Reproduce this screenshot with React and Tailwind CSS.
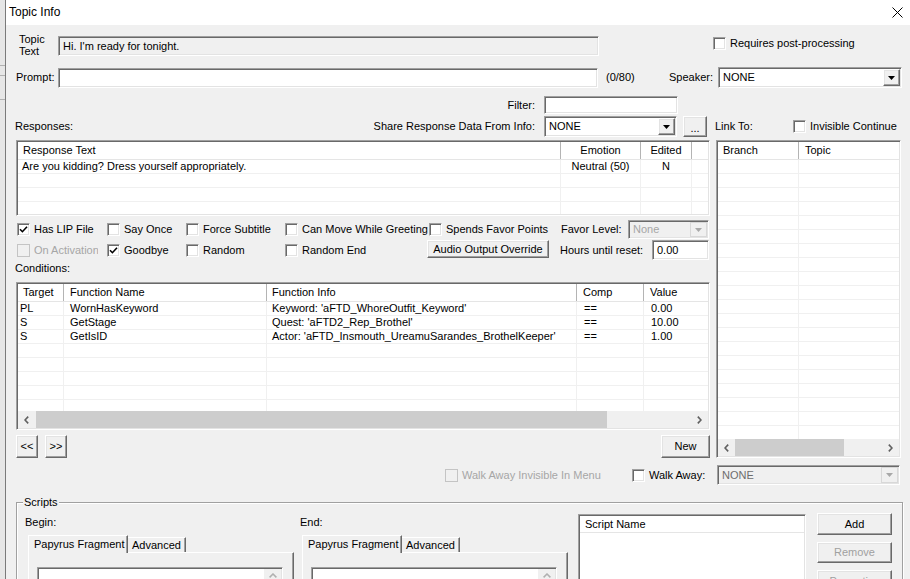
import React from "react";

const sunken =
  "border border-t-[#a0a0a0] border-l-[#a0a0a0] border-b-white border-r-white shadow-[inset_1px_1px_0_#696969,inset_-1px_-1px_0_#e3e3e3]";
const raised =
  "border border-t-white border-l-white border-b-[#696969] border-r-[#696969] shadow-[inset_-1px_-1px_0_#a0a0a0,inset_1px_1px_0_#e3e3e3]";

function Box({ checked, disabled }) {
  return (
    <span
      className={`w-[13px] h-[13px] shrink-0 flex items-center justify-center ${
        disabled ? "border border-[#c4c4c4] bg-[#f0f0f0]" : `${sunken} bg-white`
      }`}
    >
      {checked && (
        <svg width="9" height="9" viewBox="0 0 9 9">
          <path d="M1 4.3L3.4 6.7L8 1.8" stroke="#000" strokeWidth="1.6" fill="none" />
        </svg>
      )}
    </span>
  );
}

function CheckItem({ label, checked, disabled, className = "", labelClass = "" }) {
  return (
    <div className={`flex items-center gap-[4px] shrink-0 ${className}`}>
      <Box checked={checked} disabled={disabled} />
      <span className={`whitespace-nowrap ${disabled ? "text-[#a6a6a6]" : ""} ${labelClass}`}>{label}</span>
    </div>
  );
}

function Tri({ color }) {
  return (
    <svg width="7" height="4" viewBox="0 0 7 4">
      <path d="M0 0H7L3.5 4Z" fill={color} />
    </svg>
  );
}

function Combo({ className, value, disabled, textClass = "" }) {
  return (
    <div
      className={`flex items-stretch p-[1px] shrink-0 ${sunken} ${disabled ? "bg-[#f0f0f0]" : "bg-white"} ${className}`}
    >
      <span className={`flex-1 flex items-center pl-[3px] whitespace-nowrap overflow-hidden ${textClass}`}>{value}</span>
      <span className={`w-[17px] flex items-center justify-center bg-[#f0f0f0] ${disabled ? "border border-[#d8d8d8]" : raised}`}>
        <Tri color={disabled ? "#a8a8a8" : "#000"} />
      </span>
    </div>
  );
}

function Btn({ className = "", children, disabled }) {
  return (
    <div
      className={`flex items-center justify-center shrink-0 bg-[#f0f0f0] whitespace-nowrap ${raised} ${
        disabled ? "text-[#a0a0a0]" : ""
      } ${className}`}
    >
      {children}
    </div>
  );
}

function Chevron({ dir }) {
  return (
    <svg width="5" height="8" viewBox="0 0 5 8">
      <path
        d={dir === "left" ? "M4.2 0.6L1 4L4.2 7.4" : "M0.8 0.6L4 4L0.8 7.4"}
        stroke="#606060"
        strokeWidth="1.6"
        fill="none"
      />
    </svg>
  );
}

function HScroll({ thumbClass }) {
  return (
    <div className="h-[17px] shrink-0 flex bg-[#f0f0f0]">
      <div className="w-[17px] flex items-center justify-center">
        <Chevron dir="left" />
      </div>
      <div className="flex-1 flex items-stretch">
        <div className={`bg-[#cdcdcd] ${thumbClass}`} />
      </div>
      <div className="w-[17px] flex items-center justify-center">
        <Chevron dir="right" />
      </div>
    </div>
  );
}

function ListView({ className, cols, data = [], rowCount, hscroll }) {
  return (
    <div className={`flex flex-col bg-white overflow-hidden p-[1px] ${sunken} ${className}`}>
      <div className="flex h-[18px] shrink-0 border-b border-[#e5e5e5] bg-white">
        {cols.map((c, i) => (
          <div
            key={i}
            className={`${c.w} shrink-0 h-full flex items-center border-r border-[#b4b4b4] whitespace-nowrap ${c.hc}`}
          >
            {c.label}
          </div>
        ))}
        <div className="flex-1" />
      </div>
      <div className="flex-1 overflow-hidden">
        {Array.from({ length: rowCount }).map((_, r) => (
          <div key={r} className="flex h-[14px] border-b border-[#f0f0f0]">
            {cols.map((c, i) => (
              <div
                key={i}
                className={`${c.w} shrink-0 h-full flex items-center border-r border-[#f0f0f0] whitespace-nowrap overflow-hidden ${c.bc}`}
              >
                {data[r] ? data[r][i] : ""}
              </div>
            ))}
            <div className="flex-1" />
          </div>
        ))}
      </div>
      {hscroll}
    </div>
  );
}

function TabBlock({ label, tabMl }) {
  return (
    <div className="flex flex-col">
      <div className="mt-[3px] h-[12px] leading-[12px]">{label}</div>
      <div className={`mt-[7px] h-[17px] flex items-end ${tabMl}`}>
        <div className="relative z-10 w-[100px] h-[18px] -mb-[1px] pl-[5px] flex items-center bg-[#f0f0f0] border-t border-l border-r border-t-white border-l-white border-r-[#696969] shadow-[inset_-1px_0_0_#a0a0a0]">
          Papyrus Fragment
        </div>
        <div className="w-[58px] h-[15px] pl-[4px] flex items-center bg-[#f0f0f0] border-t border-r border-t-white border-r-[#696969] shadow-[inset_-1px_0_0_#a0a0a0]">
          Advanced
        </div>
      </div>
      <div
        className={`w-[266px] h-[60px] bg-[#f0f0f0] border-t border-l border-r border-t-white border-l-white border-r-[#696969] shadow-[inset_-1px_0_0_#a0a0a0] pt-[14px] pl-[8px] ${tabMl}`}
      >
        <div className={`w-[246px] h-[40px] bg-white p-[1px] flex justify-end ${sunken}`}>
          <div className="w-[17px] bg-[#f0f0f0] flex justify-center pt-[4px]">
            <svg width="8" height="5" viewBox="0 0 8 5">
              <path d="M0.6 4.4L4 1L7.4 4.4" stroke="#b0b0b0" strokeWidth="1.5" fill="none" />
            </svg>
          </div>
        </div>
      </div>
    </div>
  );
}

const respCols = [
  { w: "w-[543px]", label: "Response Text", hc: "pl-[5px]", bc: "pl-[4px]" },
  { w: "w-[80px]", label: "Emotion", hc: "justify-center", bc: "justify-center" },
  { w: "w-[51px]", label: "Edited", hc: "justify-center", bc: "justify-center" },
];

const condCols = [
  { w: "w-[46px]", label: "Target", hc: "pl-[5px]", bc: "pl-[2px]" },
  { w: "w-[203px]", label: "Function Name", hc: "pl-[6px]", bc: "pl-[6px]" },
  { w: "w-[310px]", label: "Function Info", hc: "pl-[5px]", bc: "pl-[5px]" },
  { w: "w-[67px]", label: "Comp", hc: "pl-[6px]", bc: "pl-[7px]" },
  { w: "w-[80px]", label: "Value", hc: "pl-[6px]", bc: "pl-[7px]" },
];

const condData = [
  ["PL", "WornHasKeyword", "Keyword: 'aFTD_WhoreOutfit_Keyword'", "==", "0.00"],
  ["S", "GetStage", "Quest: 'aFTD2_Rep_Brothel'", "==", "10.00"],
  ["S", "GetIsID", "Actor: 'aFTD_Insmouth_UreamuSarandes_BrothelKeeper'", "==", "1.00"],
];

const linkCols = [
  { w: "w-[81px]", label: "Branch", hc: "pl-[5px]", bc: "" },
  { w: "w-[120px]", label: "Topic", hc: "pl-[6px]", bc: "" },
];

export default function App() {
  return (
    <div className="w-[910px] h-[579px] overflow-hidden flex bg-[#f0f0f0] text-[11px] leading-[13px] text-black font-['Liberation_Sans',Arial,sans-serif]">
      <div className="w-[6px] shrink-0 bg-[#e6e6e6] border-r border-[#7a7a7a] flex flex-col">
        <div className="h-[66px] border-b border-[#b0b0b0]" />
        <div className="h-[10px] border-b border-[#b0b0b0]" />
        <div className="h-[24px] border-b border-[#b0b0b0]" />
      </div>
      <div className="w-[904px] shrink-0 flex flex-col">
        <div className="h-[25px] shrink-0 bg-white flex items-center justify-between pl-[3px] pr-[7px] text-[12px]">
          <span>Topic Info</span>
          <svg width="11" height="11" viewBox="0 0 11 11">
            <path d="M0.5 0.5L10.5 10.5M10.5 0.5L0.5 10.5" stroke="#000" strokeWidth="1" />
          </svg>
        </div>

        <div className="flex-1 flex flex-col pl-[10px]">
          {/* Row A */}
          <div className="mt-[11px] h-[20px] flex items-center shrink-0">
            <div className="w-[42px] pl-[3px] leading-[12px] shrink-0 -mt-[2px]">
              Topic
              <br />
              Text
            </div>
            <div className={`w-[541px] h-[20px] shrink-0 ${sunken} bg-[#f0f0f0] flex items-center pl-[4px]`}>
              Hi. I'm ready for tonight.
            </div>
            <CheckItem className="ml-[114px] self-start mt-[1px]" label="Requires post-processing" />
          </div>

          {/* Row B */}
          <div className="mt-[11px] h-[21px] flex items-center shrink-0">
            <div className="w-[42px] shrink-0">Prompt:</div>
            <div className={`w-[540px] h-[20px] shrink-0 ${sunken} bg-white`} />
            <div className="w-[71px] pl-[8px] shrink-0">(0/80)</div>
            <div className="w-[49px] shrink-0">Speaker:</div>
            <Combo className="w-[184px] h-[21px]" value="NONE" />
          </div>

          {/* Row C */}
          <div className="mt-[8px] h-[18px] flex items-center shrink-0">
            <div className="w-[519px] text-right shrink-0">Filter:</div>
            <div className={`ml-[9px] w-[134px] h-[18px] shrink-0 ${sunken} bg-white`} />
          </div>

          {/* Row D */}
          <div className="mt-[2px] h-[21px] flex items-center shrink-0">
            <div className="w-[519px] shrink-0 flex justify-between">
              <span className="-ml-[1px]">Responses:</span>
              <span>Share Response Data From Info:</span>
            </div>
            <Combo className="ml-[9px] w-[133px] h-[21px]" value="NONE" />
            <Btn className="ml-[6px] w-[24px] h-[21px]">
              <span className="mt-[3px]">...</span>
            </Btn>
            <div className="ml-[8px] w-[78px] shrink-0">Link To:</div>
            <CheckItem label="Invisible Continue" />
          </div>

          {/* Main */}
          <div className="mt-[3px] h-[318px] flex shrink-0">
            <div className="w-[694px] shrink-0 flex flex-col">
              <ListView
                className="h-[76px] shrink-0"
                cols={respCols}
                rowCount={4}
                data={[["Are you kidding? Dress yourself appropriately.", "Neutral (50)", "N"]]}
              />

              <div className="mt-[4px] h-[19px] flex items-center shrink-0">
                <CheckItem className="ml-[1px] w-[90px]" label="Has LIP File" checked />
                <CheckItem className="w-[79px]" label="Say Once" />
                <CheckItem className="w-[99px]" label="Force Subtitle" />
                <CheckItem className="w-[144px]" label="Can Move While Greeting" />
                <CheckItem className="w-[132px]" label="Spends Favor Points" />
                <div className="w-[67px] shrink-0">Favor Level:</div>
                <Combo className="w-[81px] h-[19px]" value="None" disabled textClass="text-[#a6a6a6]" />
              </div>

              <div className="mt-[1px] h-[20px] flex items-center shrink-0">
                <CheckItem
                  className="ml-[1px] w-[90px]"
                  label="On Activation"
                  disabled
                  labelClass="w-[64px] overflow-hidden"
                />
                <CheckItem className="w-[79px]" label="Goodbye" checked />
                <CheckItem className="w-[99px]" label="Random" />
                <CheckItem className="w-[142px]" label="Random End" />
                <Btn className="w-[122px] h-[18px] -mt-[2px]">Audio Output Override</Btn>
                <div className="ml-[11px] w-[92px] shrink-0">Hours until reset:</div>
                <div className={`w-[57px] h-[20px] shrink-0 ${sunken} bg-white flex items-center pl-[4px]`}>0.00</div>
              </div>

              <div className="mt-[2px] h-[12px] leading-[12px] -ml-[1px] shrink-0">Conditions:</div>

              <ListView
                className="mt-[8px] h-[148px] shrink-0"
                cols={condCols}
                rowCount={8}
                data={condData}
                hscroll={<HScroll thumbClass="ml-[1px] w-[571px]" />}
              />

              <div className="mt-[5px] h-[23px] flex shrink-0">
                <Btn className="w-[22px] h-[23px]">&lt;&lt;</Btn>
                <Btn className="ml-[7px] w-[22px] h-[23px]">&gt;&gt;</Btn>
                <Btn className="ml-auto w-[49px] h-[23px]">New</Btn>
              </div>
            </div>

            <ListView
              className="ml-[6px] w-[185px] h-[318px] shrink-0"
              cols={linkCols}
              rowCount={20}
              hscroll={<HScroll thumbClass="w-[109px]" />}
            />
          </div>

          {/* Row E */}
          <div className="mt-[7px] h-[20px] flex items-center shrink-0">
            <div className="w-[429px] shrink-0" />
            <CheckItem className="w-[187px]" label="Walk Away Invisible In Menu" disabled />
            <CheckItem className="w-[85px]" label="Walk Away:" />
            <Combo className="w-[183px] h-[20px]" value="NONE" disabled textClass="text-[#6d6d6d]" />
          </div>

          {/* Scripts group */}
          <div className="mt-[17px] w-[887px] h-[120px] shrink-0 relative border border-[#a0a0a0] shadow-[inset_1px_1px_0_#fff,1px_1px_0_#fff]">
            <span className="absolute left-[6px] -top-[7px] px-[1px] bg-[#f0f0f0] leading-[12px]">Scripts</span>
            <div className="flex items-start pt-[10px] pl-[8px]">
              <div className="w-[275px] shrink-0">
                <TabBlock label="Begin:" tabMl="ml-[3px]" />
              </div>
              <div className="w-[268px] shrink-0">
                <TabBlock label="End:" tabMl="ml-[2px]" />
              </div>
              <div className={`ml-[10px] mt-[1px] w-[228px] h-[80px] shrink-0 ${sunken} bg-white p-[1px] flex flex-col`}>
                <div className="h-[17px] shrink-0 border-b border-[#e5e5e5] pl-[5px] flex items-center">Script Name</div>
              </div>
              <div className="ml-[11px] w-[75px] shrink-0 flex flex-col">
                <Btn className="w-[75px] h-[22px]">Add</Btn>
                <Btn className="mt-[7px] w-[75px] h-[21px]" disabled>
                  Remove
                </Btn>
                <Btn className="mt-[7px] w-[75px] h-[22px]" disabled>
                  Properties
                </Btn>
              </div>
            </div>
          </div>
        </div>
      </div>
    </div>
  );
}
